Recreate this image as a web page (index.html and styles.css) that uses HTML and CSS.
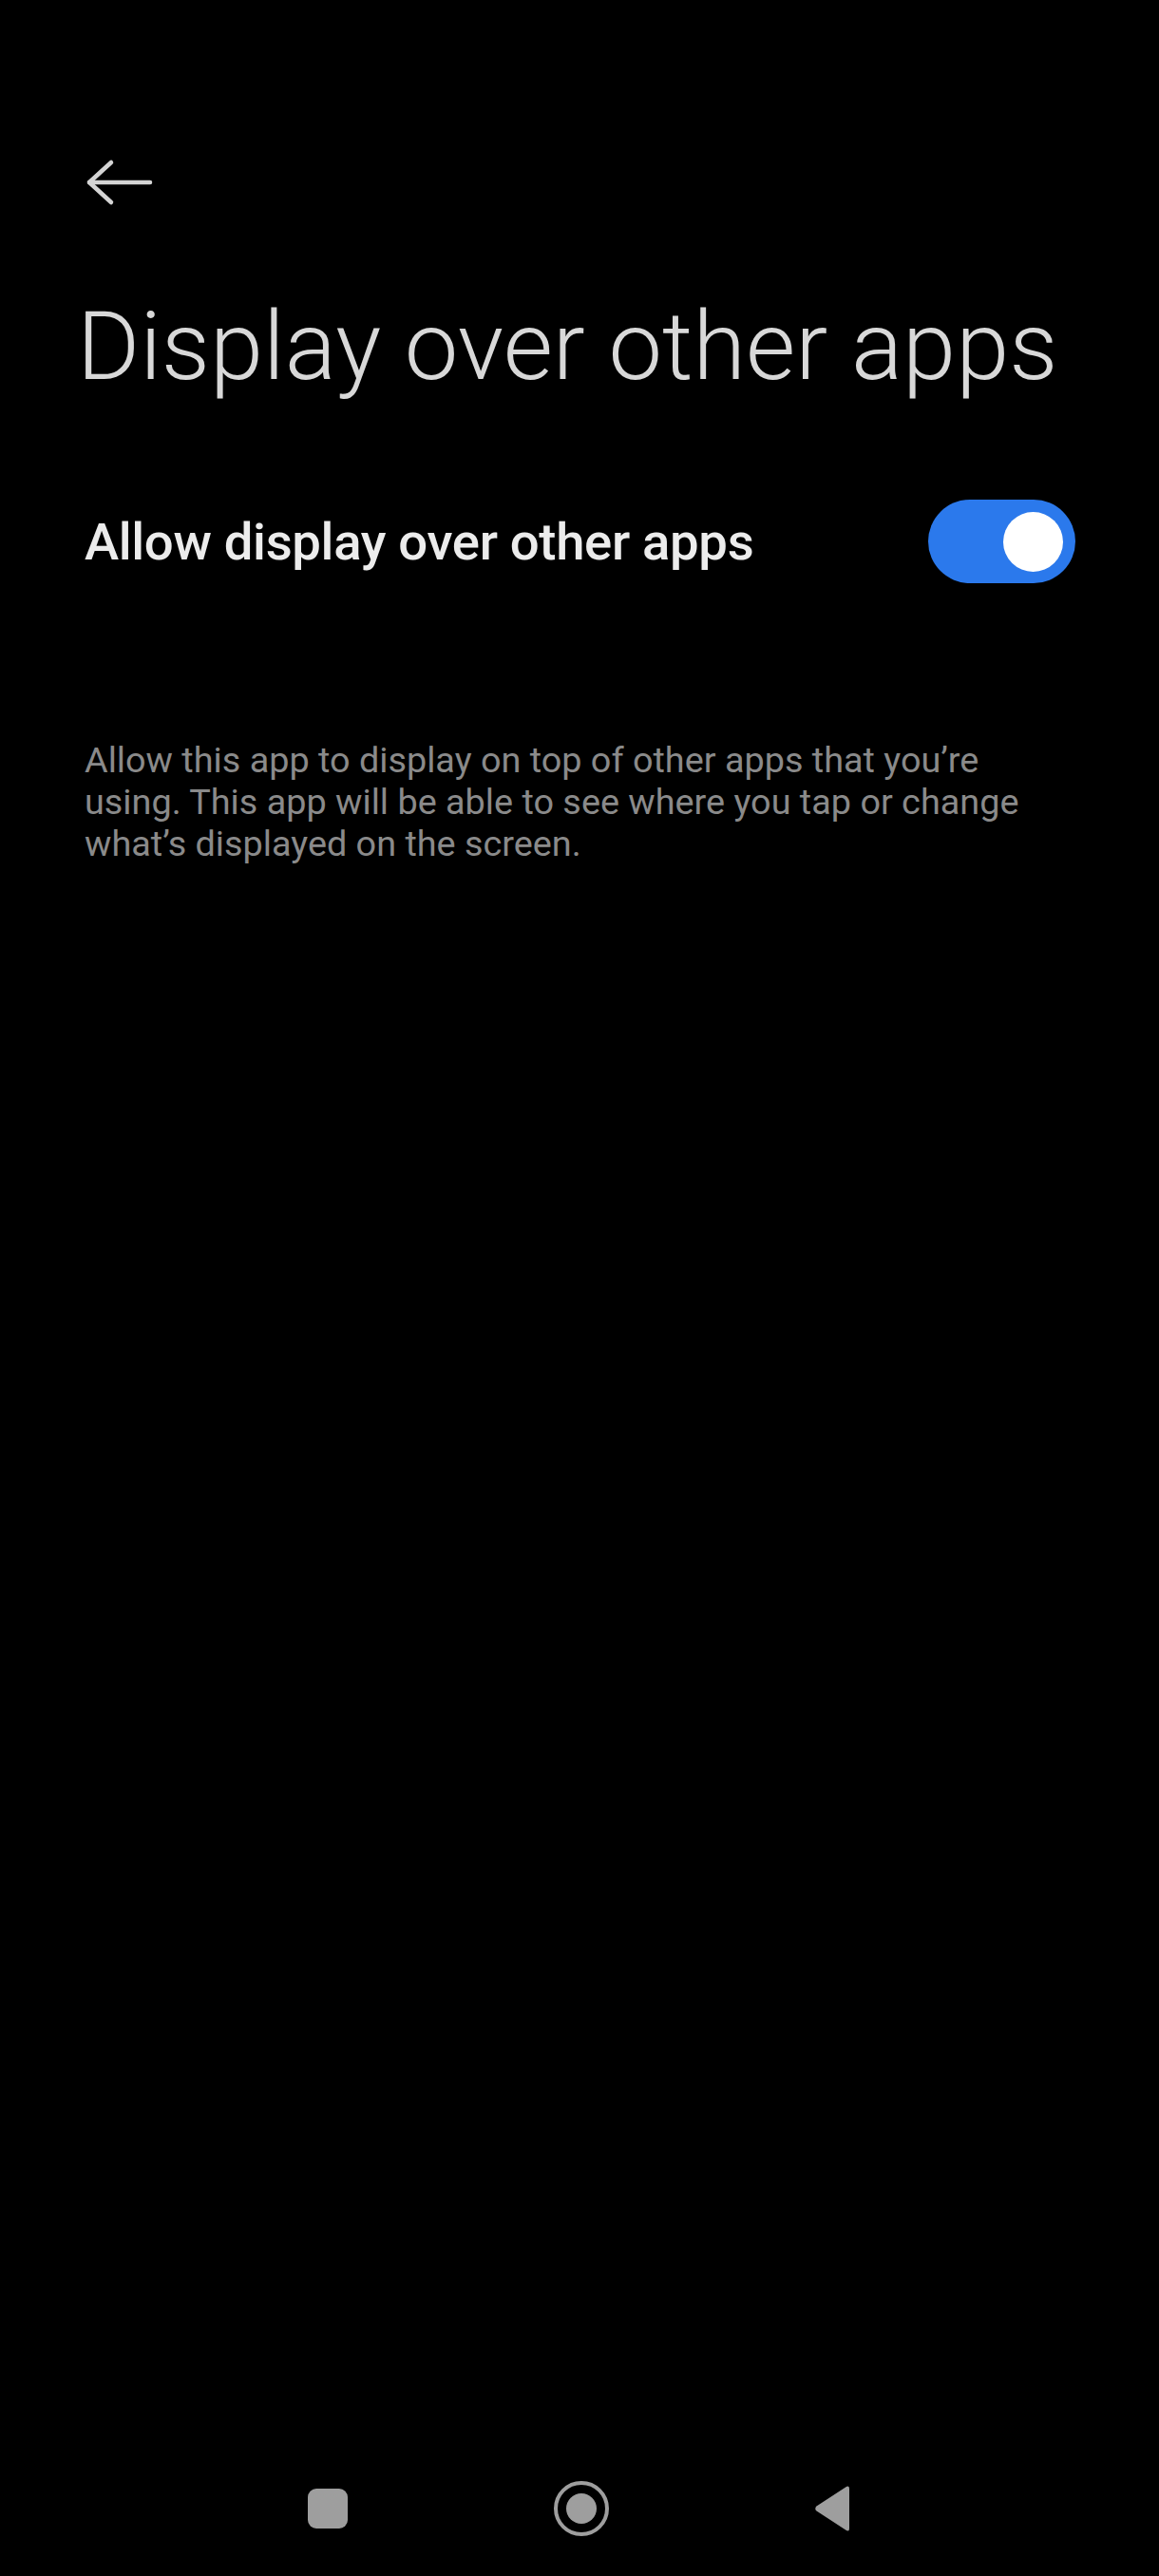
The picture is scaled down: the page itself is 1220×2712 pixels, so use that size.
FILE: index.html
```html
<!DOCTYPE html>
<html lang="en">
<head>
<meta charset="utf-8">
<title>Display over other apps</title>
<link rel="stylesheet" href="styles.css">
</head>
<body>
<div class="screen">
  <header class="topbar">
    <button class="back" aria-label="Back">
      <svg width="76" height="54" viewBox="0 0 76 54" fill="none" stroke="currentColor" stroke-width="4.5" stroke-linecap="round" stroke-linejoin="round">
        <path d="M6 27 H70"/>
        <path d="M29 6 L6 27 L29 48"/>
      </svg>
    </button>
  </header>

  <main class="content">
    <h1 class="title">Display over other apps</h1>

    <div class="setting-row">
      <span class="setting-label">Allow display over other apps</span>
      <span class="switch is-on" role="switch" aria-checked="true"><span class="switch-knob"></span></span>
    </div>

    <p class="setting-desc">Allow this app to display on top of other apps that you’re using. This app will be able to see where you tap or change what’s displayed on the screen.</p>
  </main>

  <nav class="navbar">
    <span class="nav-recents"></span>
    <span class="nav-home"><span class="nav-home-dot"></span></span>
    <svg class="nav-back" width="40" height="50" viewBox="0 0 40 50">
      <path d="M38 4 L38 46 Q38 50 34.5 47.8 L3.5 27.6 Q1 25 3.5 22.4 L34.5 2.2 Q38 0 38 4 Z" fill="#9e9e9e"/>
    </svg>
  </nav>
</div>
</body>
</html>
```

FILE: styles.css
```css
html, body {
  margin: 0;
  padding: 0;
  background: #000;
}

body {
  font-family: Roboto, "Noto Sans", "Liberation Sans", sans-serif;
  color: #e6e6e6;
}

.screen {
  min-height: 2712px;
  display: flex;
  flex-direction: column;
}

/* top bar with back arrow */
.topbar {
  padding: 165px 0 0 88px;
  height: 54px;
}

.back {
  display: block;
  padding: 0;
  margin: 0;
  border: 0;
  background: none;
  color: #d4d4d4;
  line-height: 0;
}

.content {
  padding: 0 88px 0 89px;
}

.title {
  margin: 86px 0 0 -8px;
  font-size: 101px;
  font-weight: 300;
  line-height: 120px;
  color: #d8d8d8;
  letter-spacing: 0;
}

.setting-row {
  margin-top: 101px;
  display: flex;
  align-items: center;
  justify-content: space-between;
  height: 88px;
}

.setting-label {
  font-size: 54.5px;
  font-weight: 500;
  line-height: 66px;
  letter-spacing: -0.35px;
  color: #ececec;
}

.switch {
  position: relative;
  width: 155px;
  height: 88px;
  border-radius: 44px;
  background: #2b79ec;
  flex: none;
}

.switch-knob {
  position: absolute;
  top: 13px;
  right: 13px;
  width: 63px;
  height: 63px;
  border-radius: 50%;
  background: #fff;
}

.setting-desc {
  margin: 164px 0 0;
  font-size: 37.8px;
  line-height: 44px;
  font-weight: 400;
  color: #8a8a8a;
}

/* system navigation bar */
.navbar {
  margin-top: auto;
  height: 142px;
  display: flex;
  align-items: center;
  justify-content: center;
}

.nav-recents {
  width: 42px;
  height: 42px;
  border-radius: 9px;
  background: #9e9e9e;
  margin-right: 217px;
}

.nav-home {
  width: 58px;
  height: 58px;
  box-sizing: border-box;
  border: 4.5px solid #9e9e9e;
  border-radius: 50%;
  display: flex;
  align-items: center;
  justify-content: center;
}

.nav-home-dot {
  width: 32px;
  height: 32px;
  border-radius: 50%;
  background: #9e9e9e;
}

.nav-back {
  margin-left: 215px;
}
```
